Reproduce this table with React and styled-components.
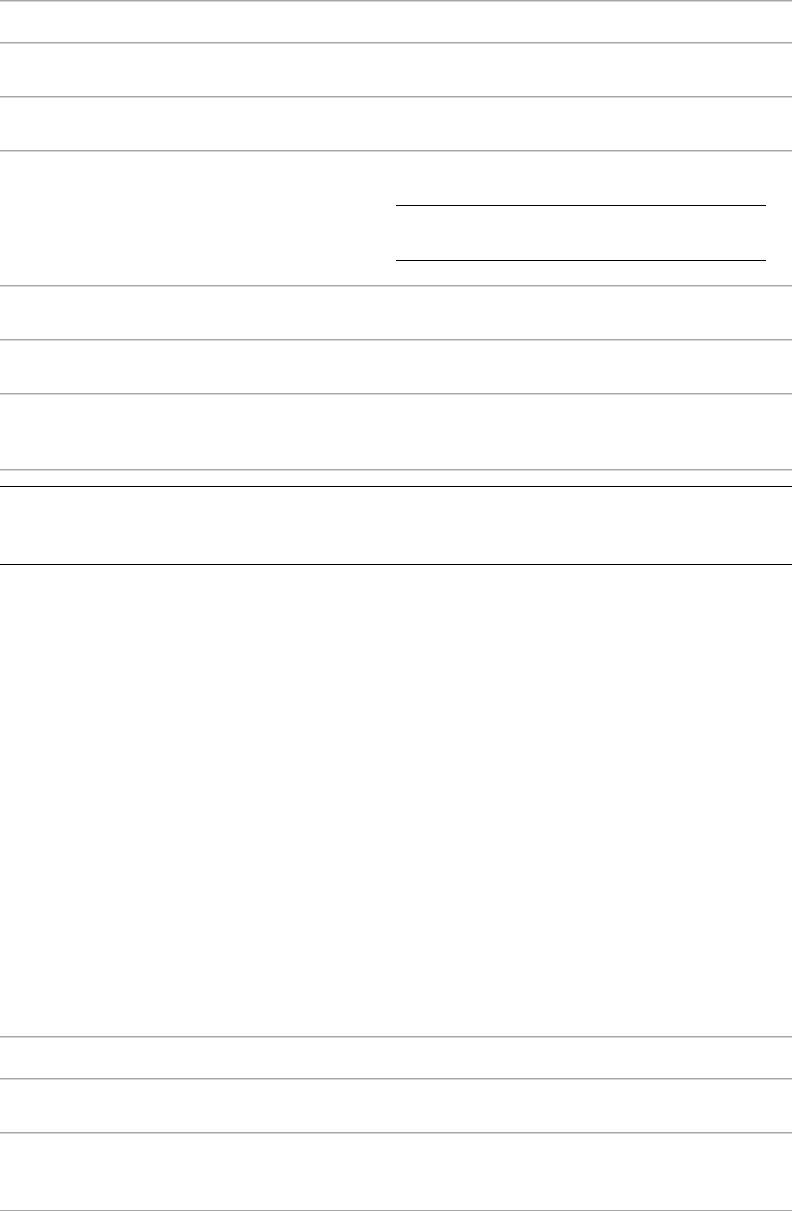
import styled, { createGlobalStyle } from "styled-components";

const GlobalStyle = createGlobalStyle`
  body {
    margin: 0;
    background: #ffffff;
    font-family: "Liberation Sans", Arial, sans-serif;
  }
`;

const Page = styled.div`
  width: 100%;
  min-height: 1211px;
  display: flex;
  flex-direction: column;
`;

const List = styled.section`
  display: flex;
  flex-direction: column;
  border-top: 1px solid #a6a6a6;
  box-shadow: inset 0 1px 0 #d6d6d6;
  padding-top: 1px;
`;

const Row = styled.div`
  height: ${(p) => p.h}px;
  display: flex;
  border-bottom: 1px solid #d6d6d6;
  box-shadow: inset 0 -1px 0 #a6a6a6;
  box-sizing: border-box;
  padding-bottom: 1px;
`;

const RowLabel = styled.div`
  width: 396px;
  color: #ffffff;
`;

const Fields = styled.div`
  width: 370px;
  display: flex;
  flex-direction: column;
  padding-top: 53px;
  gap: 54px;
`;

const Field = styled.div`
  height: 0;
  border-bottom: 1px solid #000;
`;

const Panel = styled.div`
  margin-top: 15px;
  height: 77px;
  border-top: 1px solid #000;
  border-bottom: 1px solid #000;
`;

const Spacer = styled.div`
  height: 471px;
`;

const topRows = [42, 54, 54];
const midRows = [54, 54, 76];
const bottomRows = [42, 54, 78];

export default function App() {
  return (
    <Page>
      <GlobalStyle />
      <List>
        {topRows.map((h, i) => (
          <Row key={i} h={h} />
        ))}
        <Row h={135}>
          <RowLabel />
          <Fields>
            <Field />
            <Field />
          </Fields>
        </Row>
        {midRows.map((h, i) => (
          <Row key={i} h={h} />
        ))}
      </List>
      <Panel />
      <Spacer />
      <List>
        {bottomRows.map((h, i) => (
          <Row key={i} h={h} />
        ))}
      </List>
    </Page>
  );
}
